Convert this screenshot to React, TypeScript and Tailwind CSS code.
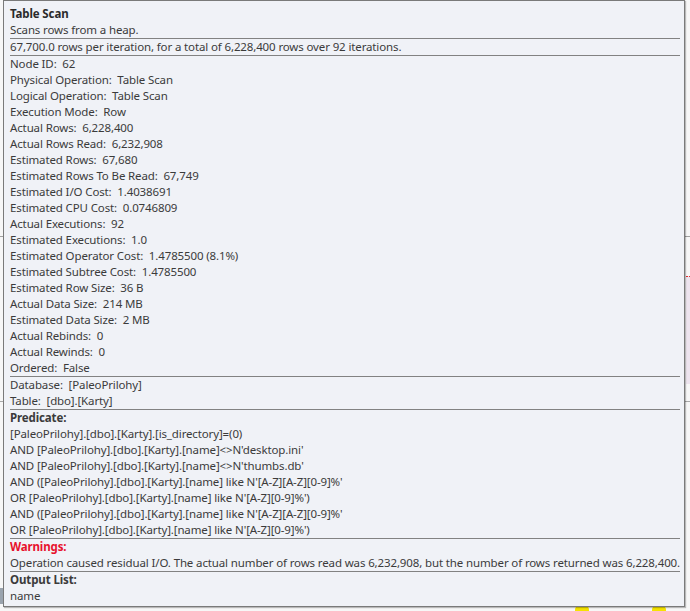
import React from 'react';

type Row = [string, string];

const header = {
  title: 'Table Scan',
  description: 'Scans rows from a heap.',
  summary: '67,700.0 rows per iteration, for a total of 6,228,400 rows over 92 iterations.',
};

const properties: Row[] = [
  ['Node ID', '62'],
  ['Physical Operation', 'Table Scan'],
  ['Logical Operation', 'Table Scan'],
  ['Execution Mode', 'Row'],
  ['Actual Rows', '6,228,400'],
  ['Actual Rows Read', '6,232,908'],
  ['Estimated Rows', '67,680'],
  ['Estimated Rows To Be Read', '67,749'],
  ['Estimated I/O Cost', '1.4038691'],
  ['Estimated CPU Cost', '0.0746809'],
  ['Actual Executions', '92'],
  ['Estimated Executions', '1.0'],
  ['Estimated Operator Cost', '1.4785500 (8.1%)'],
  ['Estimated Subtree Cost', '1.4785500'],
  ['Estimated Row Size', '36 B'],
  ['Actual Data Size', '214 MB'],
  ['Estimated Data Size', '2 MB'],
  ['Actual Rebinds', '0'],
  ['Actual Rewinds', '0'],
  ['Ordered', 'False'],
];

const objectInfo: Row[] = [
  ['Database', '[PaleoPrilohy]'],
  ['Table', '[dbo].[Karty]'],
];

const predicate = [
  '[PaleoPrilohy].[dbo].[Karty].[is_directory]=(0)',
  "AND [PaleoPrilohy].[dbo].[Karty].[name]<>N'desktop.ini'",
  "AND [PaleoPrilohy].[dbo].[Karty].[name]<>N'thumbs.db'",
  "AND ([PaleoPrilohy].[dbo].[Karty].[name] like N'[A-Z][A-Z][0-9]%'",
  "OR [PaleoPrilohy].[dbo].[Karty].[name] like N'[A-Z][0-9]%')",
  "AND ([PaleoPrilohy].[dbo].[Karty].[name] like N'[A-Z][A-Z][0-9]%'",
  "OR [PaleoPrilohy].[dbo].[Karty].[name] like N'[A-Z][0-9]%')",
];

const warning =
  'Operation caused residual I/O. The actual number of rows read was 6,232,908, but the number of rows returned was 6,228,400.';

const Line = ({ children, className = '' }: { children: React.ReactNode; className?: string }) => (
  <div className={`h-[16px] leading-[16px] whitespace-pre ${className}`}>{children}</div>
);

const Separator = () => <div className="h-px shrink-0 bg-[#828282]" />;

export default function App() {
  return (
    <div
      className="relative w-[690px] h-[611px] overflow-hidden bg-[#f7f7f7]"
      style={{ fontFamily: '"Noto Sans", "Open Sans", sans-serif' }}
    >
      {/* plan canvas fragments peeking out behind the tooltip */}
      <div className="absolute left-0 top-[236px] w-full h-px bg-[#a0a0a0]" />
      <div className="absolute left-[686px] top-[276px] w-[4px] h-[108px] bg-[#ede4ee] border-t border-dotted border-[#e03030]" />
      <div className="absolute left-0 top-[401px] w-full h-px bg-[#a8a8a8]" />
      <div className="absolute left-0 top-[588px] w-[3px] h-[16px] bg-[#9aa3ad]" />
      <div className="absolute left-[575px] top-[606px] w-[14px] h-[8px] rounded-full bg-[#f5e200]" />
      <div className="absolute left-[652px] top-[606px] w-[14px] h-[8px] rounded-full bg-[#f5e200]" />

      {/* tooltip */}
      <div className="absolute left-[3px] top-0 w-[682px] h-[607px] flex flex-col border border-[#7a7a7a] bg-[#f0f2f7] pl-[6px] pr-[4px] pt-[5px] text-[11.5px] tracking-[-0.13px] text-[#3b3b3b] shadow-[1px_1px_1px_rgba(0,0,0,0.25)]">
        <Line className="font-bold text-[#2a2a2a]">{header.title}</Line>
        <Line>{header.description}</Line>
        <Separator />
        <Line>{header.summary}</Line>
        <Separator />
        {properties.map(([k, v]) => (
          <Line key={k}>{`${k}:  ${v}`}</Line>
        ))}
        <Separator />
        {objectInfo.map(([k, v]) => (
          <Line key={k}>{`${k}:  ${v}`}</Line>
        ))}
        <Separator />
        <Line className="font-bold">Predicate:</Line>
        {predicate.map((p, i) => (
          <Line key={i}>{p}</Line>
        ))}
        <Separator />
        <Line className="font-bold text-[#e8112d]">Warnings:</Line>
        <Line>{warning}</Line>
        <Separator />
        <Line className="font-bold">Output List:</Line>
        <Line>name</Line>
      </div>
    </div>
  );
}
